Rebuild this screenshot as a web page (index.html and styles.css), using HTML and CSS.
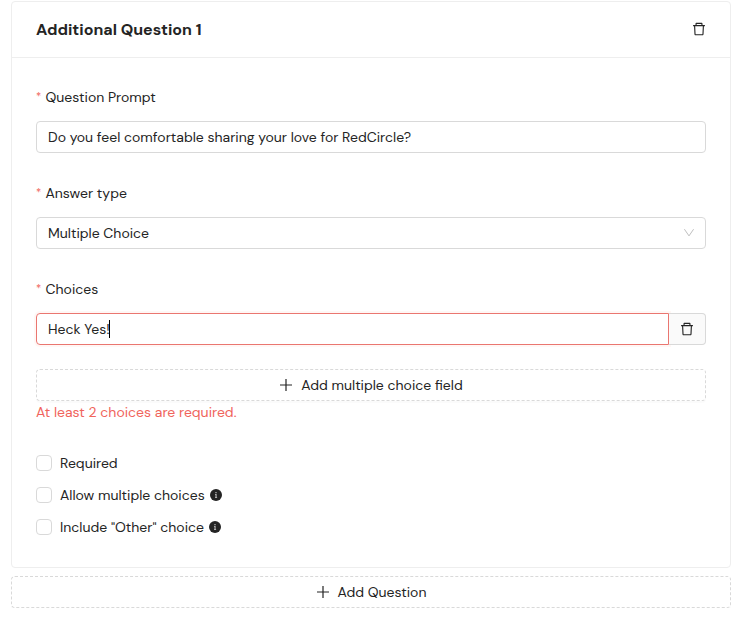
FILE: index.html
```html
<!DOCTYPE html>
<html lang="en">
<head>
  <meta charset="UTF-8">
  <meta name="viewport" content="width=device-width, initial-scale=1">
  <title>Additional Questions</title>
  <link rel="stylesheet" href="styles.css">
</head>
<body>

<!-- Shared icons -->
<svg class="sprite" width="0" height="0">
  <symbol id="icon-trash" viewBox="64 64 896 896">
    <path d="M360 184h-8c4.400 0 8-3.600 8-8v8h304v-8c0 4.400 3.600 8 8 8h-8v72h72v-80c0-35.300-28.700-64-64-64H352c-35.300 0-64 28.700-64 64v80h72v-72zm504 72H160c-17.700 0-32 14.300-32 32v32c0 4.400 3.600 8 8 8h60.400l24.700 523c1.600 34.100 29.800 61 63.900 61h454c34.200 0 62.300-26.800 63.900-61l24.700-523H888c4.400 0 8-3.600 8-8v-32c0-17.700-14.300-32-32-32zM731.300 840H292.700l-24.200-512h487l-24.200 512z"/>
  </symbol>
  <symbol id="icon-info" viewBox="0 0 12 12">
    <circle cx="6" cy="6" r="6"/>
    <path d="M5.400 3h1.200v1.200H5.400zM5 5h1.600v3.200h.5V9H5v-.8h.5V5.800H5z" fill="#fff" fill-opacity=".7"/>
  </symbol>
  <symbol id="icon-plus" viewBox="0 0 14 14">
    <path d="M7 1v12M1 7h12" fill="none" stroke="currentColor" stroke-width="1.200"/>
  </symbol>
</svg>

<main class="page">
  <section class="card">
    <header class="card-head">
      <h1 class="card-title">Additional Question 1</h1>
      <svg class="icon" width="14" height="14"><use href="#icon-trash"/></svg>
    </header>

    <div class="card-body">
      <div class="form-item">
        <div class="label"><span class="star">*</span><span>Question Prompt</span></div>
        <div class="field"><span>Do you feel comfortable sharing your love for RedCircle?</span></div>
      </div>

      <div class="form-item">
        <div class="label"><span class="star">*</span><span>Answer type</span></div>
        <div class="field select">
          <span>Multiple Choice</span>
          <svg class="arrow" width="12" height="12" viewBox="0 0 12 12"><path d="M1.400 2.200 6 8.900l4.600-6.700"/></svg>
        </div>
      </div>

      <div class="form-item">
        <div class="label"><span class="star">*</span><span>Choices</span></div>
        <div class="field-group">
          <div class="field error"><span>Heck Yes!</span><i class="caret"></i></div>
          <div class="addon"><svg class="icon" width="14" height="14"><use href="#icon-trash"/></svg></div>
        </div>
      </div>

      <div class="dashed-btn">
        <svg class="icon" width="14" height="14"><use href="#icon-plus"/></svg>
        <span>Add multiple choice field</span>
      </div>
      <div class="message">At least 2 choices are required.</div>

      <div class="checks">
        <div class="check"><i class="box"></i><span>Required</span></div>
        <div class="check"><i class="box"></i><span>Allow multiple choices</span><svg class="info" width="12" height="12"><use href="#icon-info"/></svg></div>
        <div class="check"><i class="box"></i><span>Include "Other" choice</span><svg class="info" width="12" height="12"><use href="#icon-info"/></svg></div>
      </div>
    </div>
  </section>

  <div class="dashed-btn">
    <svg class="icon" width="14" height="14"><use href="#icon-plus"/></svg>
    <span>Add Question</span>
  </div>
</main>

</body>
</html>
```

FILE: styles.css
```css
* {
  box-sizing: border-box;
}
body {
  margin: 0;
  background: #fff;
  color: #242424;
  font-family: "DM Sans", Inter, "Liberation Sans", sans-serif;
  font-size: 14px;
  line-height: 22px;
  white-space: nowrap;
}
svg {
  display: block;
  flex: none;
}
.sprite {
  position: absolute;
}
.icon, .info {
  fill: currentColor;
}
.page {
  padding: 1px 10px 0 11px;
}

/* Card */
.card {
  border: 1px solid #eee;
  border-radius: 4px;
  height: 567px;
  margin-bottom: 8px;
}
.card-head {
  display: flex;
  align-items: center;
  justify-content: space-between;
  height: 56px;
  padding: 0 24px;
  border-bottom: 1px solid #eee;
}
.card-head .icon {
  margin-bottom: 1px;
}
.card-title {
  margin: 0;
  font-size: 16px;
  font-weight: 700;
}
.card-body {
  padding: 23px 24px 0;
}

/* Form fields */
.form-item {
  margin-bottom: 24px;
}
.label {
  display: flex;
  align-items: center;
  height: 32px;
  margin-bottom: 8px;
}
.star {
  width: 9.500px;
  padding-bottom: 2px;
  color: #f0645c;
  font-size: 11px;
}
.field {
  display: flex;
  align-items: center;
  height: 32px;
  padding: 0 11px;
  border: 1px solid #d9d9d9;
  border-radius: 4px;
}
.select {
  justify-content: space-between;
  padding-right: 10px;
}
.arrow {
  fill: none;
  stroke: #bfbfbf;
}
.field-group {
  display: flex;
}
.field.error {
  flex: 1;
  border-color: #ea7670;
  border-radius: 4px 0 0 4px;
  box-shadow: 0 0 0 2px rgba(255, 120, 90, .06);
}
.caret {
  width: 1px;
  height: 18px;
  margin-left: -1px;
  background: #000;
}
.addon {
  display: flex;
  align-items: center;
  justify-content: center;
  width: 37px;
  border: 1px solid #d9d9d9;
  border-left: 0;
  border-radius: 0 4px 4px 0;
  background: #fafafa;
}

/* Buttons */
.dashed-btn {
  display: flex;
  align-items: center;
  justify-content: center;
  gap: 8px;
  height: 32px;
  border: 1px dashed #d9d9d9;
  border-radius: 4px;
  box-shadow: 0 2px 0 rgba(0, 0, 0, .015);
}
.message {
  color: #f0645c;
}

/* Checkboxes */
.checks {
  padding-top: 24px;
}
.check {
  display: flex;
  align-items: center;
  height: 32px;
}
.box {
  width: 16px;
  height: 16px;
  margin-right: 8px;
  border: 1px solid #d9d9d9;
  border-radius: 4px;
}
.info {
  margin-left: 5px;
}
```
